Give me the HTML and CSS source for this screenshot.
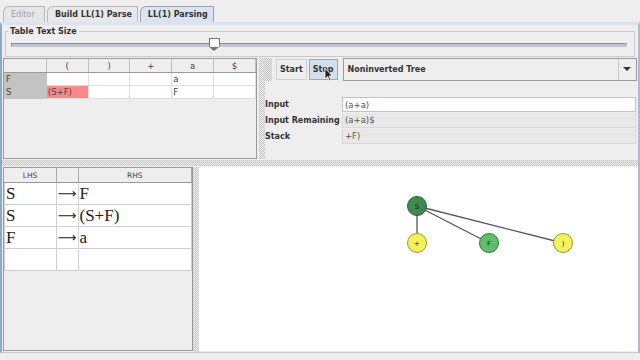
FILE: index.html
```html
<!DOCTYPE html>
<html>
<head>
  <meta charset="utf-8">
  <title>LL(1) Parsing</title>
  <link rel="stylesheet" href="styles.css">
</head>
<body>
  <div class="menu-cut"></div>

  <!-- Tabs -->
  <div class="tabs">
    <div class="tab disabled">Editor</div>
    <div class="tab">Build LL(1) Parse</div>
    <div class="tab selected">LL(1) Parsing</div>
  </div>

  <div class="tab-body">
    <!-- Text size slider -->
    <div class="size-group">
      <span class="group-title">Table Text Size</span>
      <div class="slider">
        <div class="track"></div>
        <div class="thumb" style="left: 33%"></div>
      </div>
    </div>

    <!-- Upper split: parse table + controls -->
    <div class="upper">
      <div class="parse-pane">
        <table class="parse-table">
          <tr><th></th><th>(</th><th>)</th><th>+</th><th>a</th><th>$</th></tr>
          <tr><td class="row-head">F</td><td></td><td></td><td></td><td>a</td><td></td></tr>
          <tr><td class="row-head">S</td><td class="hit">(S+F)</td><td></td><td></td><td>F</td><td></td></tr>
        </table>
      </div>
      <div class="vsplit"></div>
      <div class="control-pane">
        <div class="toolbar">
          <div class="grip"></div>
          <button class="btn">Start</button>
          <button class="btn pressed">Stop
            <svg class="cursor" width="9" height="14" viewBox="0 0 9 14">
              <path d="M1 1 L1 12 L3.5 9.5 L5.5 13.5 L7 12.8 L5 9 L8.2 9 Z" fill="#222" stroke="#fff" stroke-width="0.8"/>
            </svg>
          </button>
          <div class="combo">
            <span>Noninverted Tree</span>
            <span class="combo-arrow"></span>
          </div>
        </div>
        <div class="fields">
          <div class="field-label">Input</div>
          <div class="field editable">(a+a)</div>
          <div class="field-label">Input Remaining</div>
          <div class="field">(a+a)$</div>
          <div class="field-label">Stack</div>
          <div class="field">+F)</div>
        </div>
      </div>
    </div>

    <div class="hsplit"></div>

    <!-- Lower split: grammar + tree -->
    <div class="lower">
      <div class="grammar-pane">
        <table class="grammar">
          <tr><th class="lhs">LHS</th><th class="arr"></th><th>RHS</th></tr>
          <tr><td>S</td><td class="arr">&#10230;</td><td>F</td></tr>
          <tr><td>S</td><td class="arr">&#10230;</td><td>(S+F)</td></tr>
          <tr><td>F</td><td class="arr">&#10230;</td><td>a</td></tr>
          <tr><td></td><td class="arr"></td><td></td></tr>
        </table>
      </div>
      <div class="vsplit"></div>
      <div class="tree-pane">
        <svg class="tree" width="436" height="186" viewBox="0 0 436 186">
          <g stroke="#555" stroke-width="1.3">
            <line x1="218" y1="39" x2="218" y2="76"/>
            <line x1="218" y1="39" x2="290" y2="76"/>
            <line x1="218" y1="39" x2="364" y2="76"/>
          </g>
          <circle cx="218" cy="39" r="9.5" fill="#3f8a4f" stroke="#2c5e37"/>
          <circle cx="218" cy="76" r="9.5" fill="#f4f25c" stroke="#9a9a30"/>
          <circle cx="290" cy="76" r="9.5" fill="#5dbf68" stroke="#2f7a3b"/>
          <circle cx="364" cy="76" r="9.5" fill="#f4f25c" stroke="#9a9a30"/>
          <g class="node-text" text-anchor="middle">
            <text x="218" y="42">S</text>
            <text x="218" y="79">+</text>
            <text x="290" y="79">F</text>
            <text x="364" y="79">)</text>
          </g>
        </svg>
      </div>
    </div>
  </div>
</body>
</html>
```

FILE: styles.css
```css
/* Base */
body, html {
  margin: 0;
  padding: 0;
  height: 100%;
  overflow: hidden;
  background: #eeeeee;
  font-family: 'DejaVu Sans', sans-serif;
  color: #333;
}

.menu-cut {
  height: 6px;
}

/* Tabs */
.tabs {
  display: flex;
  height: 16px;
  padding-left: 3px;
  gap: 2px;
}

.tab {
  font-size: 8px;
  font-weight: bold;
  line-height: 15px;
  padding: 0 5px 0 7px;
  border: 1px solid #b8b8b8;
  border-bottom: none;
  border-radius: 6px 0 0 0;
  background: #e8e8e8;
  color: #333;
}

.tab.disabled {
  width: 28px;
  color: #a0a0a0;
  font-weight: normal;
  background: #e6e6e6;
}

.tab.selected {
  background: #dae4f0;
  border-color: #8ea3bc;
  color: #333;
}

.tab-body {
  height: 327px;
  border-top: 3px solid #dae4f0;
  border-left: 2px solid #8ea8c6;
  border-right: 2px solid #a8bcd2;
  border-bottom: 1px solid #c8c8c8;
  display: flex;
  flex-direction: column;
}

/* Slider group */
.size-group {
  position: relative;
  margin: 6px 3px 0 3px;
  height: 24px;
  border: 1px solid #c9c9c9;
  border-right-color: #d8c8c8;
}

.group-title {
  position: absolute;
  top: -6px;
  left: 2px;
  padding: 0 2px;
  background: #eeeeee;
  font-size: 8px;
  font-weight: bold;
  line-height: 12px;
}

.slider {
  position: relative;
  margin: 11px 7px 0 5px;
  height: 8px;
}

.track {
  height: 2px;
  border: 1px solid #8e8e8e;
  border-right-color: #c8c8c8;
  border-bottom-color: #c8c8c8;
  background: #b8c8dc;
}

.thumb {
  position: absolute;
  top: -5px;
  width: 9px;
  height: 8px;
  margin-left: -5px;
  background: #fafafa;
  border: 1px solid #777;
  border-bottom: none;
}

.thumb:after {
  content: "";
  position: absolute;
  left: -1px;
  top: 8px;
  border-left: 5.5px solid transparent;
  border-right: 5.5px solid transparent;
  border-top: 4px solid #777;
}

/* Upper split */
.upper {
  display: flex;
  height: 101px;
  margin-top: 1px;
}

.parse-pane {
  width: 252px;
  margin-left: 1px;
  border: 1px solid #9a9a9a;
  background: #eeeeee;
}

.parse-table {
  border-collapse: collapse;
  width: 100%;
  font-size: 8.5px;
  table-layout: fixed;
}

.parse-table th {
  height: 13px;
  font-weight: normal;
  color: #444;
  background: #eeeeee;
  border-right: 1px solid #bdbdbd;
  border-bottom: 1px solid #9a9a9a;
  padding: 0;
}

.parse-table td {
  height: 12px;
  padding: 0 1px;
  background: #fff;
  border: 1px solid #dedede;
  line-height: 11px;
  color: #444;
}

.parse-table td.row-head {
  background: #c3c3c3;
  border-color: #c3c3c3;
}

.parse-table td.hit {
  background: #f78a8a;
}

.vsplit {
  width: 6px;
  flex-shrink: 0;
  background: repeating-conic-gradient(#c4c4c4 0 25%, #eeeeee 0 50%) 0 0 / 2px 2px;
}

.upper .vsplit {
  margin: 0 0 0 2px;
}

.hsplit {
  height: 6px;
  margin-top: 1px;
  background: repeating-conic-gradient(#c4c4c4 0 25%, #eeeeee 0 50%) 0 0 / 2px 2px;
}

/* Controls */
.control-pane {
  flex: 1;
  display: flex;
  flex-direction: column;
}

.toolbar {
  display: flex;
  align-items: center;
  height: 23px;
  gap: 2px;
}

.grip {
  width: 7px;
  height: 23px;
  margin-right: 2px;
  background: repeating-conic-gradient(#bdbdbd 0 25%, #eeeeee 0 50%) 0 0 / 2px 2px;
}

.btn {
  position: relative;
  height: 21px;
  padding: 0 3px;
  font-family: 'DejaVu Sans', sans-serif;
  font-size: 8px;
  font-weight: bold;
  color: #333;
  background: #eeeeee;
  border: 1px solid #d0d0d0;
}

.btn.pressed {
  background: #d4dfec;
  border-color: #9aa9bb;
}

.cursor {
  position: absolute;
  left: 14px;
  top: 7px;
}

.combo {
  flex: 1;
  display: flex;
  align-items: center;
  justify-content: space-between;
  height: 21px;
  margin-left: 3px;
  margin-right: 1px;
  padding-left: 4px;
  border: 1px solid #9a9a9a;
  background: #eeeeee;
  font-size: 8px;
  font-weight: bold;
}

.combo-arrow {
  width: 17px;
  height: 21px;
  border-left: 1px solid #c8c8c8;
  position: relative;
}

.combo-arrow:after {
  content: "";
  position: absolute;
  left: 4px;
  top: 8px;
  border-left: 4px solid transparent;
  border-right: 4px solid transparent;
  border-top: 4px solid #333;
}

.fields {
  display: grid;
  grid-template-columns: 77px 1fr;
  grid-auto-rows: 15px;
  row-gap: 1px;
  margin-top: 16px;
  margin-right: 2px;
}

.field-label {
  font-size: 8px;
  font-weight: bold;
  line-height: 15px;
  white-space: nowrap;
}

.field {
  font-size: 8.5px;
  line-height: 14px;
  padding-left: 2px;
  color: #555;
  background: #e8e8e8;
  border: 1px solid #d8d8d8;
  border-top: none;
}

.field.editable {
  background: #fff;
  border: 1px solid #c4c4c4;
}

/* Lower split */
.lower {
  flex: 1;
  display: flex;
  min-height: 0;
  margin-top: 1px;
}

.grammar-pane {
  width: 188px;
  margin-left: 1px;
  margin-bottom: 1px;
  border: 1px solid #9a9a9a;
  background: #eeeeee;
}

.grammar {
  border-collapse: collapse;
  width: 100%;
  table-layout: fixed;
}

.grammar th {
  height: 14px;
  padding: 0;
  font-size: 7.5px;
  font-weight: normal;
  color: #444;
  background: #eeeeee;
  border-right: 1px solid #aaa;
  border-bottom: 1px solid #9a9a9a;
}

.grammar th.lhs {
  width: 51px;
}

.grammar .arr {
  width: 21px;
}

.grammar td {
  height: 21px;
  padding: 0 1px;
  background: #fff;
  border: 1px solid #cfcfcf;
  font-family: 'Liberation Serif', 'DejaVu Serif', serif;
  font-size: 17px;
  line-height: 20px;
  color: #222;
  white-space: nowrap;
  overflow: hidden;
}

.grammar td.arr {
  text-align: right;
  font-family: 'DejaVu Sans', sans-serif;
  font-size: 13px;
  padding: 0 1px 0 0;
}

.tree-pane {
  flex: 1;
  background: #fff;
  margin-bottom: 1px;
}

.tree {
  display: block;
}

.node-text {
  font-family: 'DejaVu Sans', sans-serif;
  font-size: 7px;
  fill: #222;
}
```
